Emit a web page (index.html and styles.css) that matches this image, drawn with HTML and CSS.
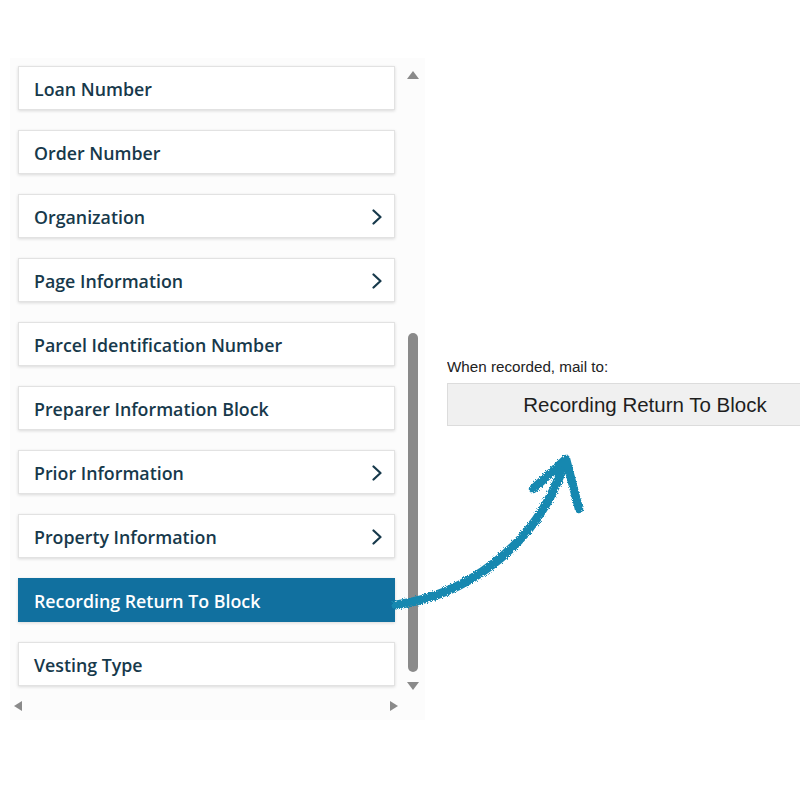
FILE: index.html
```html
<!DOCTYPE html>
<html>
<head>
<meta charset="utf-8">
<link rel="stylesheet" href="styles.css">
</head>
<body>
<div class="page">
  <div class="panel">
    <div class="list">
      <div class="card"><span>Loan Number</span></div>
      <div class="card"><span>Order Number</span></div>
      <div class="card"><span>Organization</span><svg class="chev" viewBox="0 0 10 16"><path d="M1.5 1.5 L8.5 8 L1.5 14.5"/></svg></div>
      <div class="card"><span>Page Information</span><svg class="chev" viewBox="0 0 10 16"><path d="M1.5 1.5 L8.5 8 L1.5 14.5"/></svg></div>
      <div class="card"><span>Parcel Identification Number</span></div>
      <div class="card"><span>Preparer Information Block</span></div>
      <div class="card"><span>Prior Information</span><svg class="chev" viewBox="0 0 10 16"><path d="M1.5 1.5 L8.5 8 L1.5 14.5"/></svg></div>
      <div class="card"><span>Property Information</span><svg class="chev" viewBox="0 0 10 16"><path d="M1.5 1.5 L8.5 8 L1.5 14.5"/></svg></div>
      <div class="card selected"><span>Recording Return To Block</span></div>
      <div class="card"><span>Vesting Type</span></div>
    </div>
    <div class="vscroll">
      <div class="tri tri-up"></div>
      <div class="thumb"></div>
      <div class="tri tri-down"></div>
    </div>
    <div class="hscroll">
      <div class="tri tri-left"></div>
      <div class="tri tri-right"></div>
    </div>
  </div>
  <div class="doc">
    <div class="label">When recorded, mail to:</div>
    <div class="block">Recording Return To Block</div>
  </div>
</div>
<svg class="arrow" width="800" height="800" viewBox="0 0 800 800">
  <defs>
    <filter id="chalk" x="-10%" y="-10%" width="120%" height="120%">
      <feTurbulence type="fractalNoise" baseFrequency="1.2" numOctaves="2" result="n"/>
      <feDisplacementMap in="SourceGraphic" in2="n" scale="4"/>
    </filter>
  </defs>
  <g filter="url(#chalk)" fill="none" stroke="#1688b0" stroke-linecap="round" stroke-linejoin="round">
    <path d="M396 605 C460 596 535 552 565 462" stroke-width="9"/>
    <path d="M533 489 L566 459 L579 509" stroke-width="8.5"/>
  </g>
</svg>
</body>
</html>
```

FILE: styles.css
```css
html, body {
  margin: 0;
  padding: 0;
  background: #ffffff;
  overflow: hidden;
}

.page {
  display: flex;
  align-items: flex-start;
  padding-top: 58px;
  width: 800px;
  height: 800px;
  box-sizing: border-box;
  overflow: hidden;
}

.panel {
  margin-left: 10px;
  flex: none;
  background: #fcfcfc;
  display: grid;
  grid-template-columns: 385px 30px;
  grid-template-rows: auto 30px;
}

.list {
  padding: 8px 0 0 8px;
  display: flex;
  flex-direction: column;
  gap: 20px;
}

.card {
  width: 377px;
  height: 44px;
  box-sizing: border-box;
  background: #ffffff;
  border: 1px solid #e2e2e2;
  box-shadow: 0 1px 3px rgba(0, 0, 0, 0.14);
  display: flex;
  align-items: center;
  justify-content: space-between;
  padding: 1px 12px 0 15px;
  font-family: "Open Sans", "Noto Sans", sans-serif;
  font-weight: 600;
  font-size: 17.8px;
  color: #17394b;
}

.card.selected {
  background: #11709f;
  border-color: #11709f;
  color: #ffffff;
}

.chev {
  width: 10px;
  height: 16px;
  fill: none;
  stroke: #17394b;
  stroke-width: 2.2;
  stroke-linecap: round;
  stroke-linejoin: round;
}

.vscroll {
  display: flex;
  flex-direction: column;
  align-items: flex-start;
  padding: 13px 0 0 13px;
}

.tri {
  width: 0;
  height: 0;
}

.tri-up {
  margin-left: -1px;
  border-left: 6px solid transparent;
  border-right: 6px solid transparent;
  border-bottom: 8px solid #8a8a8a;
}

.tri-down {
  margin: 10px 0 0 -1px;
  border-left: 6px solid transparent;
  border-right: 6px solid transparent;
  border-top: 8px solid #8a8a8a;
}

.thumb {
  margin-top: 254px;
  width: 10px;
  height: 339px;
  border-radius: 5px;
  background: #8a8a8a;
}

.hscroll {
  grid-column: 1 / span 2;
  width: 388px;
  box-sizing: border-box;
  padding: 11px 0 0 4px;
  display: flex;
  justify-content: space-between;
  align-items: flex-start;
}

.tri-left {
  border-top: 5px solid transparent;
  border-bottom: 5px solid transparent;
  border-right: 8px solid #8a8a8a;
}

.tri-right {
  border-top: 5px solid transparent;
  border-bottom: 5px solid transparent;
  border-left: 8px solid #8a8a8a;
}

.doc {
  margin: 300px 0 0 22px;
  flex: 1;
  min-width: 0;
  overflow: hidden;
  font-family: "Liberation Sans", Arial, sans-serif;
  color: #222222;
}

.label {
  font-size: 15.2px;
  line-height: 17px;
  margin-bottom: 8px;
}

.block {
  width: 396px;
  height: 43px;
  box-sizing: border-box;
  background: #f0f0f0;
  border: 1px solid #dcdcdc;
  display: flex;
  align-items: center;
  justify-content: center;
  font-size: 20.5px;
  color: #1e1e1e;
}

.arrow {
  position: absolute;
  left: 0;
  top: 0;
  pointer-events: none;
}
```
